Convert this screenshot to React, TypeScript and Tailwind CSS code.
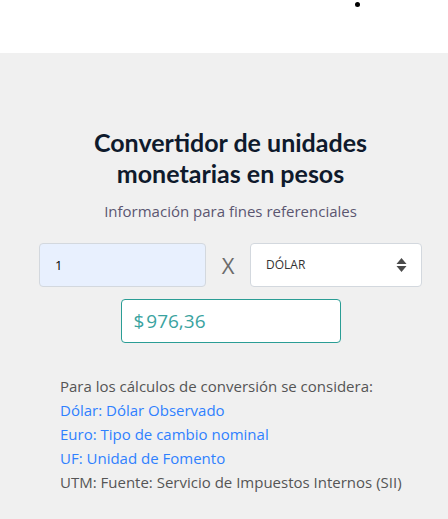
import { useState } from 'react';

const sans = { fontFamily: '"Open Sans", "Noto Sans", sans-serif' };
const heading = { fontFamily: 'Lato, "Open Sans", sans-serif' };

export default function App() {
  const [amount, setAmount] = useState('1');

  return (
    <div className="min-h-screen bg-[#f0f0f0]" style={sans}>
      {/* Top bar */}
      <div className="relative h-[53px] bg-white">
        <span className="absolute left-[355px] top-[2px] h-[5px] w-[5px] rounded-full bg-black" />
      </div>

      <div className="ml-[39px] w-[383px] pt-[74px]">
        <h1
          className="text-center text-[25px] font-bold leading-[31px] text-[#0f1a2c]"
          style={heading}
        >
          Convertidor de unidades
          <br />
          monetarias en pesos
        </h1>
        <p className="mt-[12px] text-center text-[15px] leading-[20px] text-[#5b5670]">
          Información para fines referenciales
        </p>

        {/* Amount x currency */}
        <div className="mt-[22px] flex items-center">
          <input
            value={amount}
            onChange={(e) => setAmount(e.target.value)}
            className="h-[44px] w-[167px] rounded-[4px] border border-[#d3d8de] bg-[#e8f0fe] px-[15px] text-[13px] text-black outline-none"
            style={sans}
          />
          <span className="w-[44px] text-center text-[22px] leading-none text-[#6b6b6b]">X</span>
          <div className="flex h-[44px] flex-1 items-center justify-between rounded-[4px] border border-[#d3d8de] bg-white pl-[15px] pr-[14px]">
            <span className="text-[12px] text-[#333]">DÓLAR</span>
            <svg width="11" height="16" viewBox="0 0 11 16" fill="#4a4a4a">
              <path d="M5.5 1L10.5 7H0.5z" />
              <path d="M5.5 15L10.5 9H0.5z" />
            </svg>
          </div>
        </div>

        {/* Result */}
        <div className="mt-[12px] flex justify-center">
          <div className="flex h-[44px] w-[220px] items-center rounded-[4px] border border-[#2a9d95] bg-white px-[12px] text-[19px] text-[#3aa3a0]">
            $&#8202;976,36
          </div>
        </div>
      </div>

      {/* Sources */}
      <div className="mt-[31px] pl-[60px] text-[15px] leading-[24px] text-[#555]">
        <p>Para los cálculos de conversión se considera:</p>
        <p className="text-[#2f80ff]">Dólar: Dólar Observado</p>
        <p className="text-[#2f80ff]">Euro: Tipo de cambio nominal</p>
        <p className="text-[#2f80ff]">UF: Unidad de Fomento</p>
        <p>UTM: Fuente: Servicio de Impuestos Internos (SII)</p>
      </div>
    </div>
  );
}
